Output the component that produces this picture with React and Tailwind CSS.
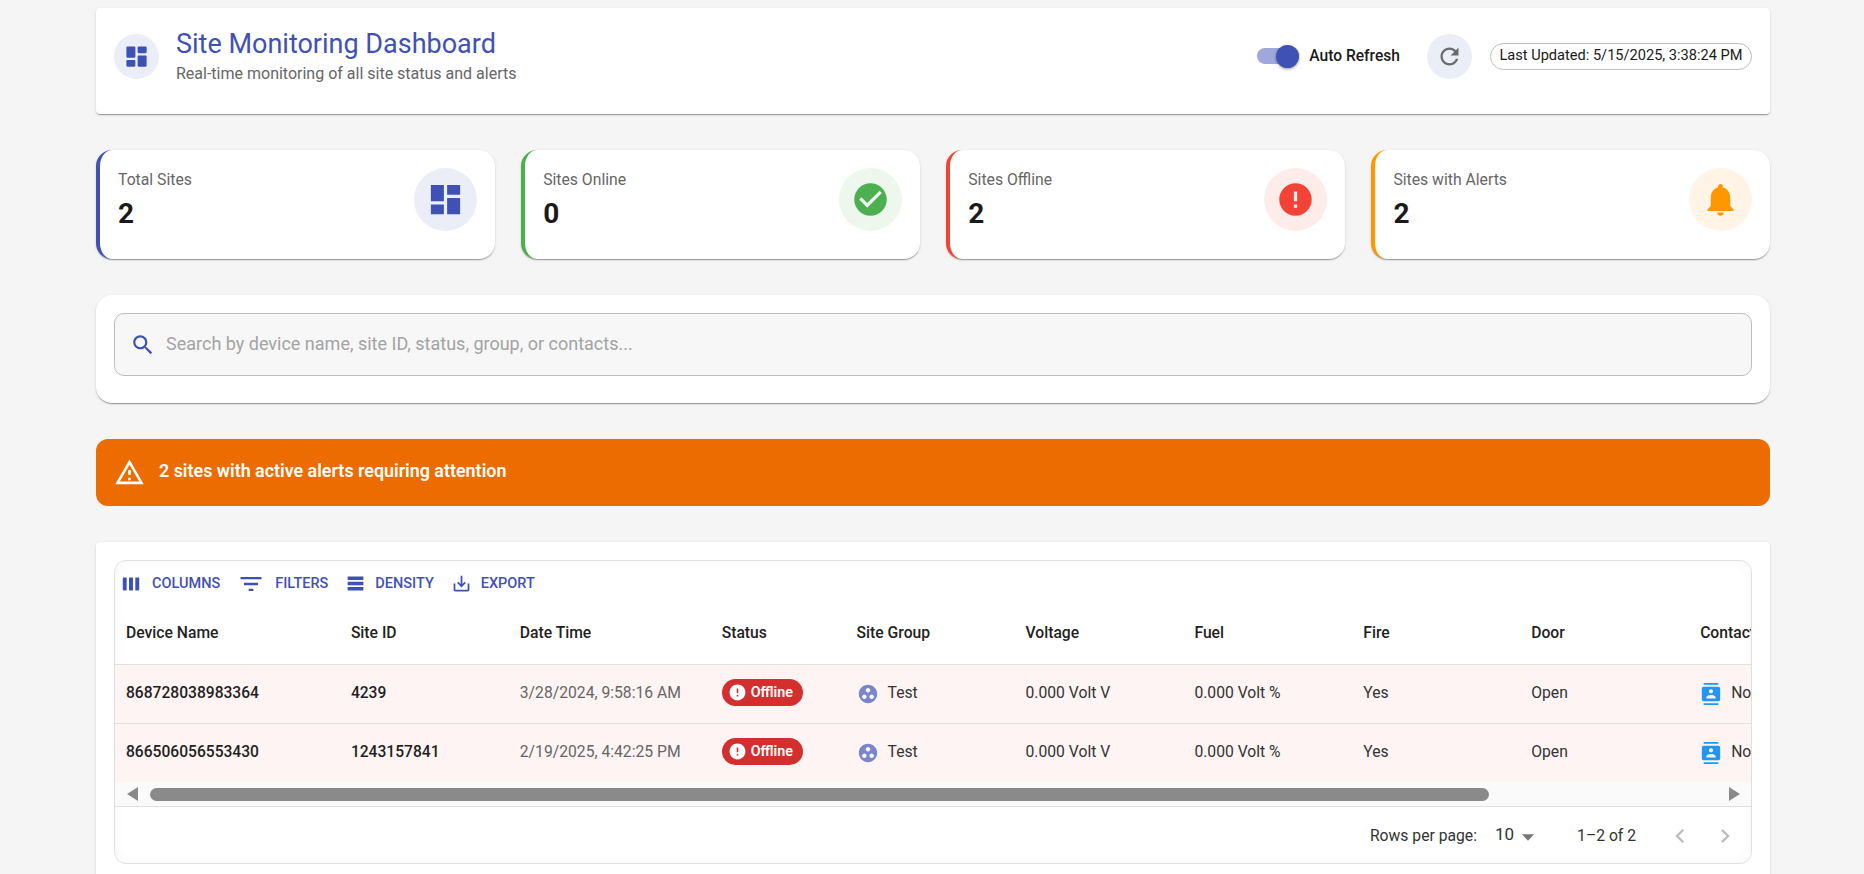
import React from "react";

const cardShadow = "shadow-[0_2px_1px_-1px_rgba(0,0,0,0.2),0_1px_1px_0_rgba(0,0,0,0.14),0_1px_3px_0_rgba(0,0,0,0.12)]";

// Material icon paths
const paths = {
  dashboard: "M3 13h8V3H3v10zm0 8h8v-6H3v6zm10 0h8V11h-8v10zm0-18v6h8V3h-8z",
  dashboardRounded:
    "M4 13h6c.55 0 1-.45 1-1V4c0-.55-.45-1-1-1H4c-.55 0-1 .45-1 1v8c0 .55.45 1 1 1zm0 8h6c.55 0 1-.45 1-1v-4c0-.55-.45-1-1-1H4c-.55 0-1 .45-1 1v4c0 .55.45 1 1 1zm10 0h6c.55 0 1-.45 1-1v-8c0-.55-.45-1-1-1h-6c-.55 0-1 .45-1 1v8c0 .55.45 1 1 1zM13 4v4c0 .55.45 1 1 1h6c.55 0 1-.45 1-1V4c0-.55-.45-1-1-1h-6c-.55 0-1 .45-1 1z",
  refresh:
    "M17.65 6.35C16.2 4.9 14.21 4 12 4c-4.42 0-7.99 3.58-7.99 8s3.57 8 7.99 8c3.73 0 6.84-2.55 7.73-6h-2.08c-.82 2.33-3.04 4-5.65 4-3.31 0-6-2.69-6-6s2.69-6 6-6c1.66 0 3.14.69 4.22 1.78L13 11h7V4l-2.35 2.35z",
  check: "M12 2C6.48 2 2 6.48 2 12s4.48 10 10 10 10-4.48 10-10S17.52 2 12 2zm-2 15l-5-5 1.41-1.41L10 14.17l7.59-7.59L19 8l-9 9z",
  error: "M12 2C6.48 2 2 6.48 2 12s4.48 10 10 10 10-4.48 10-10S17.52 2 12 2zm1 15h-2v-2h2v2zm0-4h-2V7h2v6z",
  bell: "M12 22c1.1 0 2-.9 2-2h-4c0 1.1.89 2 2 2zm6-6v-5c0-3.07-1.64-5.64-4.5-6.32V4c0-.83-.67-1.5-1.5-1.5s-1.5.67-1.5 1.5v.68C7.63 5.36 6 7.92 6 11v5l-2 2v1h16v-1l-2-2z",
  search:
    "M15.5 14h-.79l-.28-.27C15.41 12.59 16 11.11 16 9.5 16 5.91 13.09 3 9.5 3S3 5.91 3 9.5 5.91 16 9.5 16c1.61 0 3.09-.59 4.23-1.57l.27.28v.79l5 4.99L20.49 19l-4.99-5zm-6 0C7.01 14 5 11.99 5 9.5S7.01 5 9.5 5 14 7.01 14 9.5 11.99 14 9.5 14z",
  warning: "M12 5.99 19.53 19H4.47L12 5.99M12 2 1 21h22L12 2zm1 14h-2v2h2v-2zm0-6h-2v4h2v-4z",
  columns: "M4 5h3.3v14H4c-.55 0-1-.45-1-1V6c0-.55.45-1 1-1zm5.85 0h4.3v14h-4.3V5zm6.85 0H20c.55 0 1 .45 1 1v12c0 .55-.45 1-1 1h-3.3V5z",
  filter: "M10 18h4v-2h-4v2zM3 6v2h18V6H3zm3 7h12v-2H6v2z",
  density: "M21 8H3V4h18v4zm0 2H3v4h18v-4zm0 6H3v4h18v-4z",
  exportIcon: "M19 12v7H5v-7H3v7c0 1.1.9 2 2 2h14c1.1 0 2-.9 2-2v-7h-2zm-6 .67l2.59-2.58L17 11.5l-5 5-5-5 1.41-1.41L11 12.67V3h2z",
  groupWork:
    "M12 2C6.48 2 2 6.48 2 12s4.48 10 10 10 10-4.48 10-10S17.52 2 12 2zM8 17.5c-1.38 0-2.5-1.12-2.5-2.5s1.12-2.5 2.5-2.5 2.5 1.12 2.5 2.5-1.12 2.5-2.5 2.5zM9.5 8c0-1.38 1.12-2.5 2.5-2.5s2.5 1.12 2.5 2.5-1.12 2.5-2.5 2.5S9.5 9.38 9.5 8zm6.5 9.5c-1.38 0-2.5-1.12-2.5-2.5s1.12-2.5 2.5-2.5 2.5 1.12 2.5 2.5-1.12 2.5-2.5 2.5z",
  contacts:
    "M20 0H4v2h16V0zM4 24h16v-2H4v2zM20 4H4c-1.1 0-2 .9-2 2v12c0 1.1.9 2 2 2h16c1.1 0 2-.9 2-2V6c0-1.1-.9-2-2-2zm-8 2.75c1.24 0 2.25 1.01 2.25 2.25s-1.01 2.25-2.25 2.25S9.75 10.24 9.75 9 10.76 6.75 12 6.75zM17 17H7v-1.5c0-1.67 3.33-2.5 5-2.5s5 .83 5 2.5V17z",
  chevronLeft: "M15.41 7.41 14 6l-6 6 6 6 1.41-1.41L10.83 12z",
  chevronRight: "M10 6 8.59 7.41 13.17 12l-4.58 4.59L10 18l6-6z",
};

const Icon = ({ name, className }) => (
  <svg viewBox="0 0 24 24" fill="currentColor" className={className}>
    <path d={paths[name]} />
  </svg>
);

const stats = [
  { label: "Total Sites", value: "2", icon: "dashboard", border: "border-[#3f51b5]", circle: "bg-[#ebedf7]", color: "text-[#3f51b5]" },
  { label: "Sites Online", value: "0", icon: "check", border: "border-[#4caf50]", circle: "bg-[#edf7ee]", color: "text-[#4caf50]" },
  { label: "Sites Offline", value: "2", icon: "error", border: "border-[#f44336]", circle: "bg-[#feeceb]", color: "text-[#f44336]" },
  { label: "Sites with Alerts", value: "2", icon: "bell", border: "border-[#ff9800]", circle: "bg-[#fff4e5]", color: "text-[#ff9800]" },
];

const rows = [
  { device: "868728038983364", site: "4239", date: "3/28/2024, 9:58:16 AM" },
  { device: "866506056553430", site: "1243157841", date: "2/19/2025, 4:42:25 PM" },
];

const toolbar = [
  { label: "COLUMNS", icon: "columns", size: "w-[22px] h-[22px]", gap: "gap-[10px]" },
  { label: "FILTERS", icon: "filter", size: "w-7 h-7", gap: "gap-[10px]" },
  { label: "DENSITY", icon: "density", size: "w-[21px] h-[21px]", gap: "gap-[9px]" },
  { label: "EXPORT", icon: "exportIcon", size: "w-[21px] h-[21px]", gap: "gap-[9px]" },
];

const StatCard = ({ stat }) => (
  <div className={`h-[109px] bg-white rounded-2xl border-l-4 ${stat.border} ${cardShadow} pl-[18px] pr-[18px] pt-[18px] flex items-start justify-between`}>
    <div>
      <div className="text-[15.75px] leading-[24px] text-[#666]">{stat.label}</div>
      <div className="mt-[3px] text-[28px] leading-[38px] font-bold text-[#1a1a1a]">{stat.value}</div>
    </div>
    <div className={`w-[63px] h-[63px] rounded-full flex items-center justify-center ${stat.circle} ${stat.color}`}>
      <Icon name={stat.icon} className="w-[39px] h-[39px]" />
    </div>
  </div>
);

const DataRow = ({ row }) => (
  <div className="flex h-[58.5px] bg-[#fdf4f3] border-b border-[#e0e0e0] last:border-b-0 items-center text-[15.7px] text-[#333] w-[1760px]">
    <div className="w-[226px] pl-[11px] text-[15.6px] font-medium text-[#1f1f1f]">{row.device}</div>
    <div className="w-[169px] pl-[10px] text-[15.6px] font-medium text-[#1f1f1f]">{row.site}</div>
    <div className="w-[202px] pl-[10px] pb-[2px] text-[#666]">{row.date}</div>
    <div className="w-[135px] pl-[10px] pt-[1px]">
      <span className="inline-flex items-center h-[27px] w-[81px] rounded-full bg-[#d32f2f] text-white pl-[6px] gap-[4px] text-[14.3px] font-semibold">
        <Icon name="error" className="w-[19px] h-[19px]" />
        Offline
      </span>
    </div>
    <div className="w-[169px] pl-[10px] flex items-center">
      <Icon name="groupWork" className="w-[22px] h-[22px] text-[#7986cb]" />
      <span className="ml-[9px] pb-[2px]">Test</span>
    </div>
    <div className="w-[169px] pl-[10px] pb-[2px]">0.000 Volt V</div>
    <div className="w-[169px] pl-[10px] pb-[2px]">0.000 Volt %</div>
    <div className="w-[168px] pl-[10px] pb-[2px]">Yes</div>
    <div className="w-[169px] pl-[10px] pb-[2px]">Open</div>
    <div className="w-[185px] pl-[10px] flex items-center">
      <Icon name="contacts" className="w-[22px] h-[22px] text-[#2196f3]" />
      <span className="ml-[9px] pb-[2px]">No Contacts</span>
    </div>
  </div>
);

export default function App() {
  return (
    <div className="h-screen overflow-hidden bg-[#f5f5f5] pl-[96px] pr-[94px] pt-2 font-['Roboto',sans-serif] flex flex-col gap-[36px]">
      {/* Page header */}
      <header className={`h-[106px] shrink-0 bg-white rounded ${cardShadow} pl-[18px] pr-[18px] pt-[26px] flex items-start justify-between`}>
        <div className="flex items-start">
          <div className="w-[45px] h-[45px] rounded-full bg-[#ebedf7] text-[#3f51b5] flex items-center justify-center">
            <Icon name="dashboardRounded" className="w-[27px] h-[27px]" />
          </div>
          <div className="ml-[17px] -mt-[5px]">
            <h1 className="text-[27px] leading-[30px] text-[#3f51b5] font-normal">Site Monitoring Dashboard</h1>
            <p className="mt-[5px] text-[16px] leading-[20px] text-[#666]">Real-time monitoring of all site status and alerts</p>
          </div>
        </div>
        <div className="flex items-center h-[45px]">
          <div className="relative w-[42px] h-[16px] rounded-full bg-[#9fa8da] -mt-[1px]">
            <span className="absolute right-0 top-[-3.5px] w-[23px] h-[23px] rounded-full bg-[#3f51b5] shadow-[0_1px_3px_rgba(0,0,0,0.4)]" />
          </div>
          <span className="ml-[10px] text-[15.6px] font-medium text-[#1a1a1a]">Auto Refresh</span>
          <div className="ml-[27px] w-[45px] h-[45px] rounded-full bg-[#ebedf7] text-[#6b6b6b] flex items-center justify-center">
            <Icon name="refresh" className="w-[27px] h-[27px]" />
          </div>
          <div className="ml-[18px] w-[262px] h-[27px] rounded-full border border-[#bdbdbd] flex items-center justify-center text-[14.6px] text-[#1a1a1a] -mt-[1px]">
            Last Updated: 5/15/2025, 3:38:24 PM
          </div>
        </div>
      </header>

      {/* Stat cards */}
      <section className="grid grid-cols-4 gap-[26.5px] shrink-0">
        {stats.map((stat) => (
          <StatCard key={stat.label} stat={stat} />
        ))}
      </section>

      {/* Search */}
      <section className={`h-[108px] shrink-0 bg-white rounded-2xl ${cardShadow} px-[18px] pt-[18px]`}>
        <div className="h-[63px] rounded-[10px] border border-[#bdbdbd] bg-[#f7f7f7] flex items-center pl-[15px]">
          <Icon name="search" className="w-[26px] h-[26px] text-[#3f51b5]" />
          <span className="ml-[10px] pb-[2px] text-[18px] text-[#a3a3a3]">Search by device name, site ID, status, group, or contacts...</span>
        </div>
      </section>

      {/* Alert banner */}
      <section className="h-[67px] shrink-0 rounded-xl bg-[#ed6c02] text-white flex items-center pl-[18px]">
        <Icon name="warning" className="w-[31px] h-[31px]" />
        <span className="ml-[14px] pb-[2px] text-[17.9px] font-semibold">2 sites with active alerts requiring attention</span>
      </section>

      {/* Table card */}
      <section className={`flex-1 -mb-2 min-h-[341px] shrink-0 bg-white rounded-t ${cardShadow} px-[18px] pt-[18px]`}>
        <div className="h-[304px] rounded-xl border border-[#e0e0e0] overflow-hidden shadow-[inset_0_0_14px_rgba(0,0,0,0.035)]">
          <div className="h-[45px] flex items-center pl-[5px] text-[#3f51b5]">
            <div className="flex items-center gap-[17px]">
              {toolbar.map((item) => (
                <div key={item.label} className={`flex items-center ${item.gap}`}>
                  <Icon name={item.icon} className={item.size} />
                  <span className="text-[14.5px] font-medium">{item.label}</span>
                </div>
              ))}
            </div>
          </div>

          <div className="overflow-hidden">
            <div className="flex h-[59px] pb-[4px] items-center text-[15.7px] font-medium text-[#1f1f1f] border-b border-[#e0e0e0] w-[1760px]">
              <div className="w-[226px] pl-[11px]">Device Name</div>
              <div className="w-[169px] pl-[10px]">Site ID</div>
              <div className="w-[202px] pl-[10px]">Date Time</div>
              <div className="w-[135px] pl-[10px]">Status</div>
              <div className="w-[169px] pl-[10px]">Site Group</div>
              <div className="w-[169px] pl-[10px]">Voltage</div>
              <div className="w-[169px] pl-[10px]">Fuel</div>
              <div className="w-[168px] pl-[10px]">Fire</div>
              <div className="w-[169px] pl-[10px]">Door</div>
              <div className="w-[185px] pl-[10px]">Contacts</div>
            </div>
            {rows.map((row) => (
              <DataRow key={row.device} row={row} />
            ))}
          </div>

          {/* Horizontal scrollbar */}
          <div className="h-[25px] bg-[#fafafa] border-b border-[#e0e0e0] flex items-center pl-[12px] pr-[11px]">
            <svg viewBox="0 0 11 14" className="w-[11px] h-[14px] text-[#8a8a8a]" fill="currentColor">
              <path d="M11 0v14L0 7z" />
            </svg>
            <div className="flex-1 ml-[12px] mr-[13px]">
              <div className="h-[13px] w-[1339px] rounded-full bg-[#8a8a8a]" />
            </div>
            <svg viewBox="0 0 11 14" className="w-[11px] h-[14px] text-[#8a8a8a]" fill="currentColor">
              <path d="M0 0v14l11-7z" />
            </svg>
          </div>

          {/* Pagination */}
          <div className="h-[58px] flex items-center justify-end text-[15.7px] text-[#333] pr-[12px]">
            <span>Rows per page:</span>
            <span className="ml-[18px] -mt-[2px] text-[17px]">10</span>
            <svg viewBox="0 0 11 6" className="ml-[8px] mt-[2px] w-[12px] h-[7px] text-[#757575]" fill="currentColor">
              <path d="M0 0h11L5.5 6z" />
            </svg>
            <span className="ml-[43px]">1–2 of 2</span>
            <Icon name="chevronLeft" className="ml-[30px] w-[28px] h-[28px] text-[#bdbdbd]" />
            <Icon name="chevronRight" className="ml-[17px] w-[28px] h-[28px] text-[#bdbdbd]" />
          </div>
        </div>
      </section>
    </div>
  );
}
